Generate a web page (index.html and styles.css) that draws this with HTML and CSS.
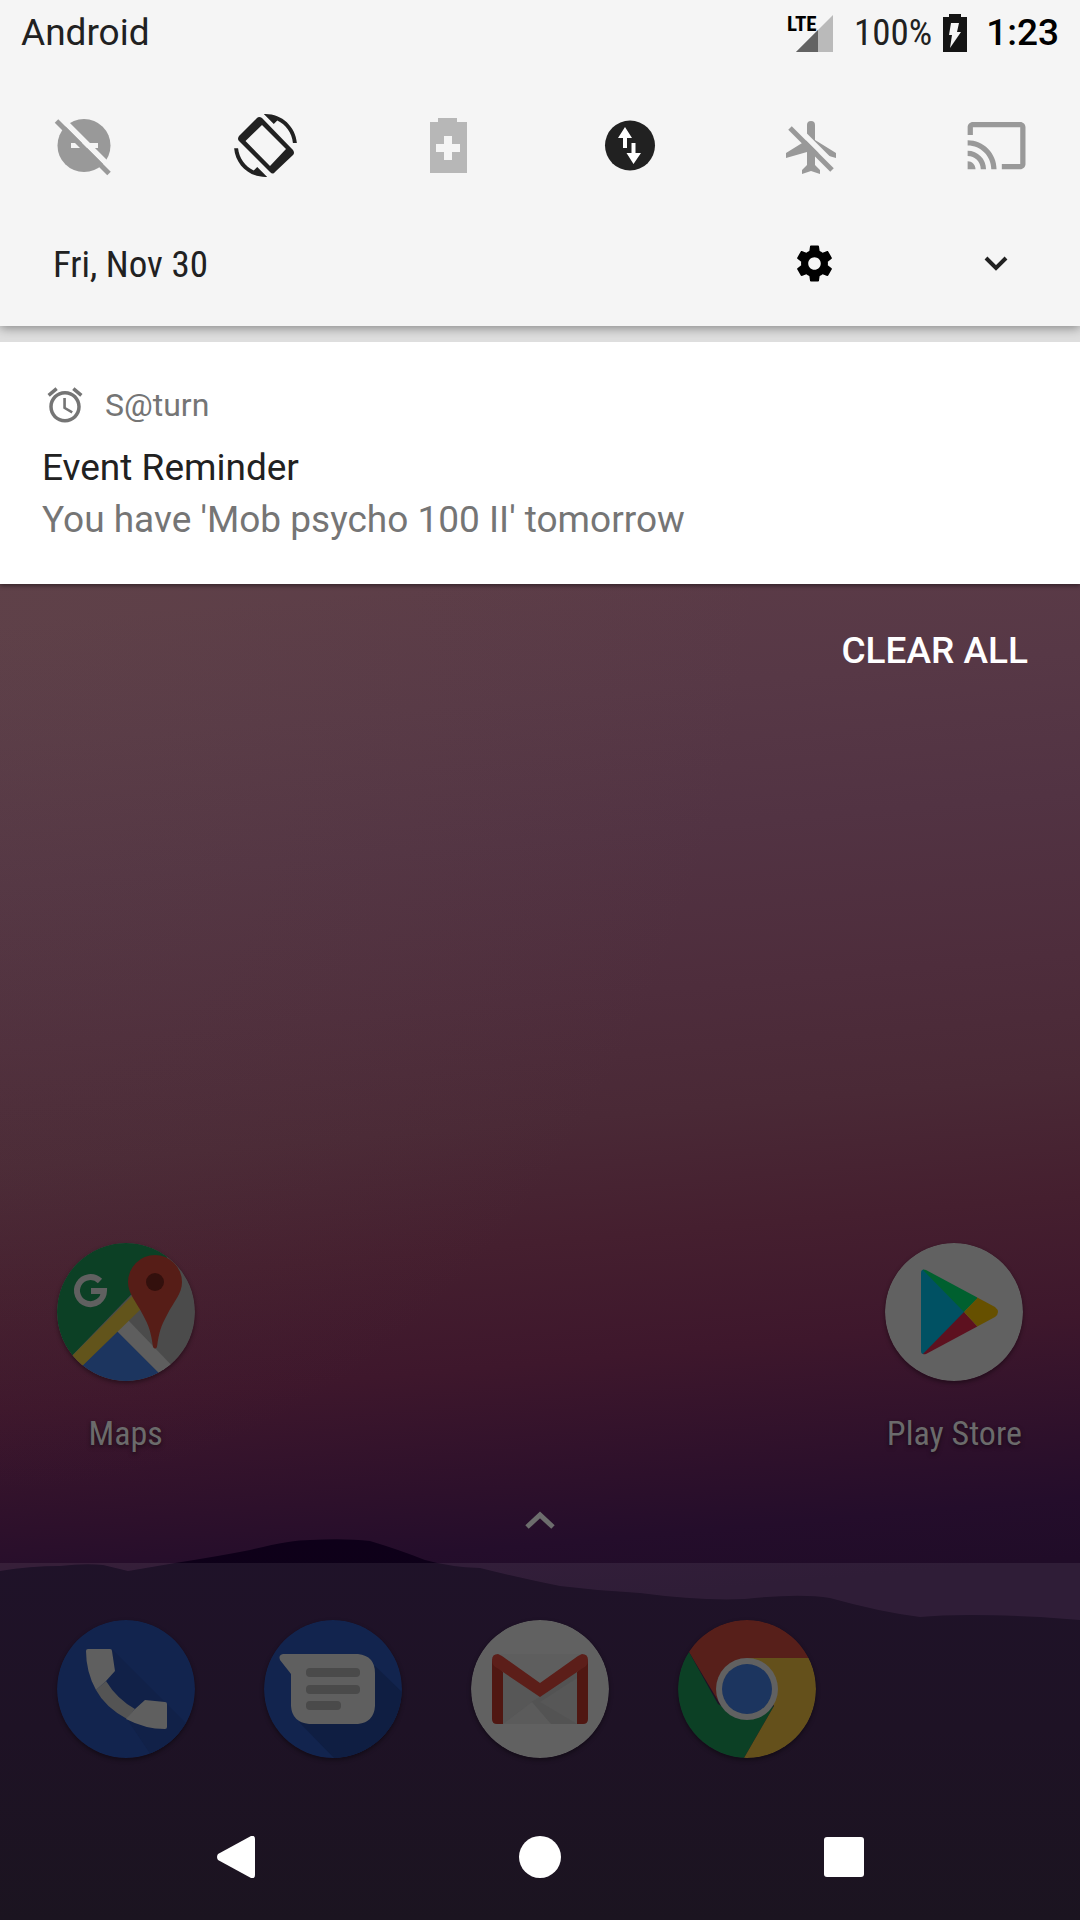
FILE: index.html
```html
<!DOCTYPE html>
<html lang="en">
<head>
<meta charset="utf-8">
<meta name="viewport" content="width=device-width, initial-scale=1">
<title>Android</title>
<link rel="stylesheet" href="styles.css">
</head>
<body>
<div class="screen">
  <svg class="mountains" viewBox="0 0 1080 390" preserveAspectRatio="none" aria-hidden="true">
    <defs>
      <linearGradient id="ridge" x1="0" y1="0" x2="0" y2="1">
        <stop offset="0" stop-color="#0e0019"/>
        <stop offset=".5" stop-color="#0d0115"/>
        <stop offset="1" stop-color="#0a0310"/>
      </linearGradient>
    </defs>
    <path fill="url(#ridge)" d="M0 41Q30 36 60 36Q85 33 103 35L128 41Q140 39 175 33Q220 26 250 20Q290 10 310 10Q345 8 370 11Q400 20 425 30Q450 37 480 38Q520 48 560 56Q600 61 640 63Q700 71 745 69Q800 63 830 68Q880 82 920 87Q960 83 1040 87L1080 90V390H0Z"/>
  </svg>

  <main class="home">
    <div class="apps">
      <a class="app app-first" href="#maps">
        <svg class="app-icon" viewBox="0 0 138 138" aria-hidden="true">
          <clipPath id="disc"><circle cx="69" cy="69" r="69"/></clipPath>
          <g clip-path="url(#disc)">
            <path fill="#4b4b4b" d="M0 0H138V138H0Z"/>
            <path fill="#0c4025" d="M0 0H124L8 120H0Z"/>
            <path fill="#1c355f" d="M60 88L110 138H10Z"/>
            <path fill="#5e5e5e" d="M71 77L122 130L110 138L60 88Z"/>
            <path fill="#62541b" d="M8 120L76 52L86 64L18 130Z"/>
          </g>
          <path fill="#561d17" d="M98 12a27 27 0 0 1 27 27c0 12-8 19-15 33c-6 11-8 17-10 32q-2 3-4 0c-2-15-4-21-10-32c-7-14-15-21-15-33a27 27 0 0 1 27-27z"/>
          <circle cx="98" cy="39" r="9" fill="#33100d"/>
          <path fill="none" stroke="#606060" stroke-width="6" d="M43 38A13.500 13.500 0 1 0 47 48H34"/>
        </svg>
        <span>Maps</span>
      </a>
      <a class="app app-last" href="#play">
        <svg class="app-icon" viewBox="0 0 138 138" aria-hidden="true">
          <clipPath id="play"><path d="M36 30q0-5 5-3L110 64q6 5 0 10L41 111q-5 1-5-3z"/></clipPath>
          <circle cx="69" cy="69" r="69" fill="#616161"/>
          <g clip-path="url(#play)">
            <path fill="#005163" d="M36 24L80 69L36 114Z"/>
            <path fill="#00602f" d="M36 25V20L92 50V56L79 69Z"/>
            <path fill="#5d111f" d="M36 113V120L92 88V83L79 69Z"/>
            <path fill="#665000" d="M92 50V55.500L79 69L92 83V90L120 69Z"/>
          </g>
        </svg>
        <span>Play Store</span>
      </a>
    </div>
    <button class="drawer" type="button" aria-label="All apps">
      <svg width="30" height="18" viewBox="0 0 30 18" aria-hidden="true"><path fill="none" stroke="#6d6d6d" stroke-width="5" d="M2 16L15 4L28 16"/></svg>
    </button>
    <div class="bottom">
      <div class="dock">
        <a class="app" href="#phone" aria-label="Phone">
          <svg class="app-icon" viewBox="0 0 138 138" aria-hidden="true">
            <circle cx="69" cy="69" r="69" fill="#12244e"/>
            <path clip-path="url(#disc)" fill="#112148" d="M55 29L138 112V138H96L70 99L49 61Z"/>
            <path fill="#545454" d="M49 61Q60 79 78 89L70 99Q48 87 39 70Z"/>
            <path fill="#5f5f5f" d="M31 29H53Q55 29 55 31L58 51L49 61L39 70Q29 52 29 31Q29 29 31 29ZM78 89L88 80L108 82Q110 82 110 84V107Q110 109 108 109Q88 109 69 99Z"/>
          </svg>
        </a>
        <a class="app" href="#messages" aria-label="Messages">
          <svg class="app-icon" viewBox="0 0 138 138" aria-hidden="true">
            <circle cx="69" cy="69" r="69" fill="#12244e"/>
            <path clip-path="url(#disc)" fill="#0f1e42" d="M111 46L138 72V138H70L35 102Z"/>
            <path fill="#5f5f5f" d="M19 34H94Q111 36 111 53V86Q110 102 94 104H45Q28 102 27 86V54L16 40Q14 35 19 34Z"/>
            <g fill="#4a4a4a"><rect x="42" y="48" width="54" height="9" rx="4"/><rect x="42" y="65" width="54" height="9" rx="4"/><rect x="42" y="81" width="35" height="9" rx="4"/></g>
          </svg>
        </a>
        <a class="app" href="#gmail" aria-label="Gmail">
          <svg class="app-icon" viewBox="0 0 138 138" aria-hidden="true">
            <circle cx="69" cy="69" r="69" fill="#616161"/>
            <path fill="#575757" d="M32 45H106V104H32Z"/>
            <path fill="#5e5e5e" d="M27 34H111L69 64Z"/>
            <path fill="#505050" d="M32 52L60 82L69 77L106 50V58L69 82L106 104H80L60 82Z" opacity=".5"/>
            <path fill="#5b5b5b" d="M32 104L61 82L80 104Z"/>
            <path fill="#501712" d="M21 40L32 52V104H26Q21 104 21 99ZM117 40L106 52V104H112Q117 104 117 99Z"/>
            <path fill="#5c1e19" d="M21 40Q21 34 27 34L31 36L69 63L107 36L111 34Q117 34 117 40Q117 46 112 48L69 77L26 48Q21 46 21 40Z"/>
          </svg>
        </a>
        <a class="app" href="#chrome" aria-label="Chrome">
          <svg class="app-icon" viewBox="0 0 138 138" aria-hidden="true">
            <g clip-path="url(#disc)">
              <path fill="#571f1a" d="M0 0H138V38H69L42 84L11 32Z"/>
              <path fill="#0c4025" d="M11 32L0 20V138H66L96 86L69 100L40 84Z"/>
              <path fill="#64501b" d="M69 38H138V138H66L96 86Z"/>
            </g>
            <circle cx="69" cy="69" r="31" fill="#616161"/>
            <circle cx="69" cy="69" r="25" fill="#1c355f"/>
          </svg>
        </a>
      </div>
      <nav class="navbar" aria-label="System">
        <button type="button" aria-label="Back"><svg width="42" height="42" viewBox="0 0 42 42" aria-hidden="true"><path fill="#fff" d="M3 18L36 0Q40-1 40 3V39Q40 43 36 42L3 24Q1 21 3 18Z"/></svg></button>
        <button type="button" aria-label="Home"><svg width="42" height="42" viewBox="0 0 42 42" aria-hidden="true"><circle cx="21" cy="21" r="21" fill="#fff"/></svg></button>
        <button type="button" aria-label="Overview"><svg width="42" height="42" viewBox="0 0 42 42" aria-hidden="true"><rect x="1" y="1" width="40" height="40" rx="3" fill="#fff"/></svg></button>
      </nav>
    </div>
  </main>

  <section class="shade" aria-label="Notification shade">
    <header class="panel">
      <div class="status">
        <span class="carrier">Android</span>
        <svg class="signal" width="48" height="40" viewBox="0 0 48 40" role="img" aria-label="LTE signal">
          <path fill="#bababa" d="M47 2V39H10Z"/>
          <path fill="#636363" d="M32 17V39H10Z"/>
          <text class="lte" x="1" y="18">LTE</text>
        </svg>
        <span class="percent">100%</span>
        <svg class="battery" width="24" height="38" viewBox="0 0 24 38" aria-hidden="true">
          <path fill="#141414" d="M6 0H18V3H24V38H0V3H6Z"/>
          <path fill="#f5f5f5" d="M8 9H16L14 18H18L7 34L9 21H6Z"/>
        </svg>
        <time class="clock">1:23</time>
      </div>
      <div class="tiles">
        <button type="button" aria-label="Do not disturb"><svg class="tile" viewBox="0 0 72 72" aria-hidden="true">
          <circle cx="36" cy="35.500" r="26.500" fill="#999"/><path fill="#f5f5f5" d="M23 33H50V38H23Z"/>
          <path stroke="#f5f5f5" stroke-width="5.500" d="M8 3L68 63"/><path stroke="#999" stroke-width="5" d="M8.500 11L61 63.500"/></svg></button>
        <button type="button" aria-label="Auto-rotate"><svg class="tile" viewBox="0 0 72 72" aria-hidden="true">
          <g fill="#212121" transform="translate(4 4)">
            <path transform="scale(2.625)" d="M16.480 2.520c3.270 1.550 5.610 4.720 5.970 8.480h1.500C23.440 4.840 18.290 0 12 0l-.66.030 3.810 3.810 1.330-1.320zM7.520 21.480C4.250 19.940 1.910 16.760 1.550 13H.050C.56 19.160 5.710 24 12 24l.66-.030-3.810-3.810-1.330 1.320z"/>
            <path fill-rule="evenodd" d="M5 22L23 4Q25 2 28 4L59 36Q61 39 59 41L41 58Q39 61 36 58L5 27Q3 25 5 22ZM11.500 27L36 52L52 35L28 11Z"/>
          </g></svg></button>
        <button type="button" aria-label="Battery saver"><svg class="tile" viewBox="0 0 72 72" aria-hidden="true">
          <path fill="#b7b7b7" d="M26 8H45V12H55V63H18V12H26Z"/><path fill="#f5f5f5" d="M32 26H40V34H48V42H40V50H32V42H24V34H32Z"/></svg></button>
        <button type="button" aria-label="Mobile data"><svg class="tile" viewBox="0 0 72 72" aria-hidden="true">
          <circle cx="36" cy="35.500" r="25" fill="#212121"/><path fill="#fff" d="M31 17L38 28H33V38H29V28H24ZM39.500 54L32.500 43H37.500V33H41.500V43H47Z"/></svg></button>
        <button type="button" aria-label="Airplane mode"><svg class="tile" viewBox="0 0 72 72" aria-hidden="true">
          <path fill="#999" d="M31 15a4 4 0 0 1 8 0V30L60 43V48L39 42V55L44 60V64L35 61L26 64V60L31 55V42L10 48V43L31 30Z"/>
          <path stroke="#f5f5f5" stroke-width="5.500" d="M12 8.500L62 58.500"/><path stroke="#999" stroke-width="5" d="M14 18L56 60"/></svg></button>
        <button type="button" aria-label="Cast"><svg class="tile" viewBox="0 0 72 72" aria-hidden="true">
          <path fill="#999" transform="translate(7 4) scale(2.630)" d="M21 3H3c-1.100 0-2 .9-2 2v3h2V5h18v14h-7v2h7c1.100 0 2-.9 2-2V5c0-1.100-.9-2-2-2zM1 18v3h3c0-1.660-1.340-3-3-3zm0-4v2c2.760 0 5 2.240 5 5h2c0-3.870-3.130-7-7-7zm0-4v2c4.970 0 9 4.030 9 9h2c0-6.080-4.930-11-11-11z"/></svg></button>
      </div>
      <div class="date-row">
        <span class="date">Fri, Nov 30</span>
        <button type="button" aria-label="Settings"><svg width="43" height="43" viewBox="0 0 24 24" aria-hidden="true"><path d="M19.430 12.980c.040-.32.070-.64.070-.98s-.030-.66-.070-.98l2.110-1.650c.19-.15.24-.42.12-.64l-2-3.460c-.12-.22-.39-.3-.61-.22l-2.490 1c-.52-.4-1.080-.73-1.690-.98l-.38-2.650C14.460 2.180 14.250 2 14 2h-4c-.25 0-.46.180-.49.420l-.38 2.650c-.61.25-1.170.59-1.690.98l-2.490-1c-.23-.090-.49 0-.61.22l-2 3.460c-.13.22-.070.49.12.64l2.110 1.650c-.040.32-.070.65-.070.98s.030.66.070.98l-2.110 1.650c-.19.15-.24.42-.12.64l2 3.460c.12.22.39.3.61.22l2.490-1c.52.4 1.080.73 1.690.98l.38 2.650c.030.24.24.42.49.42h4c.25 0 .46-.18.49-.42l.38-2.650c.61-.25 1.170-.59 1.690-.98l2.490 1c.23.090.49 0 .61-.22l2-3.460c.12-.22.070-.49-.12-.64l-2.110-1.650zM12 15.500c-1.930 0-3.500-1.570-3.500-3.500s1.570-3.500 3.500-3.500 3.500 1.570 3.500 3.500-1.570 3.500-3.500 3.500z"/></svg></button>
        <button type="button" aria-label="Expand"><svg width="24" height="16" viewBox="0 0 24 16" aria-hidden="true"><path fill="none" stroke="#212121" stroke-width="4" d="M2 3L12 13L22 3"/></svg></button>
      </div>
    </header>
    <article class="notification">
      <div class="source">
        <svg width="42" height="42" viewBox="0 0 24 24" aria-hidden="true"><path fill="#757575" d="M22 5.720l-4.600-3.860-1.290 1.530 4.600 3.860L22 5.720zM7.880 3.390L6.600 1.860 2 5.710l1.290 1.530 4.590-3.850zM12.500 8H11v6l4.750 2.850.75-1.230-4-2.370V8zM12 4c-4.970 0-9 4.030-9 9s4.020 9 9 9c4.970 0 9-4.030 9-9s-4.030-9-9-9zm0 16c-3.870 0-7-3.130-7-7s3.130-7 7-7 7 3.130 7 7-3.130 7-7 7z"/></svg>
        <span>S@turn</span>
      </div>
      <h1>Event Reminder</h1>
      <p>You have 'Mob psycho 100 II' tomorrow</p>
    </article>
    <button class="clear" type="button">CLEAR ALL</button>
  </section>
</div>
</body>
</html>
```

FILE: styles.css
```css
* { box-sizing: border-box; }

body {
  margin: 0;
  font-family: Roboto, "Liberation Sans", sans-serif;
  font-size: 37px;
  color: #212121;
}

button {
  display: flex;
  align-items: center;
  justify-content: center;
  padding: 0;
  border: 0;
  background: none;
  font: inherit;
  color: inherit;
}

a { color: inherit; text-decoration: none; }
svg { display: block; }

.screen {
  position: relative;
  min-height: 100vh;
  display: flex;
  flex-direction: column;
  background:
    radial-gradient(ellipse at 0 25%, rgba(112, 92, 80, .2), transparent 50%),
    linear-gradient(175deg,
      #5b3b47 31%, #573846 37%, #523343 44%, #4e2d3c 52%, #4a2936 58%,
      #451f2f 64%, #3e172c 70%, #2d102b 76%, #240d2b 79%, #200c28 82%);
}

.mountains {
  position: absolute;
  left: 0;
  bottom: 0;
  width: 100%;
  height: 390px;
}

/* Launcher */
.home {
  position: relative;
  flex: 1;
  display: flex;
  flex-direction: column;
  justify-content: flex-end;
  padding-top: 640px;
}

.apps, .dock {
  display: grid;
  grid-template-columns: repeat(5, 1fr);
  padding: 0 22px;
}

.app {
  display: flex;
  flex-direction: column;
  align-items: center;
  gap: 32px;
  font-family: "Roboto Condensed", "Liberation Sans Narrow", Roboto, sans-serif;
  font-size: 34px;
  line-height: 40px;
  color: #6b6b6b;
  text-shadow: 0 2px 4px rgba(0, 0, 0, .5);
  white-space: nowrap;
}

.app-last { grid-column: 5; }

.app-icon {
  width: 138px;
  height: 138px;
  border-radius: 50%;
  box-shadow: 0 2px 4px rgba(0, 0, 0, .4);
}

.drawer {
  align-self: center;
  width: 126px;
  height: 86px;
  margin-top: 24px;
}

.bottom { background: rgba(255, 255, 255, .07); }
.dock { padding-top: 57px; padding-bottom: 36px; }

.navbar {
  display: flex;
  justify-content: center;
  gap: 94px;
}

.navbar button { width: 210px; height: 126px; }

/* Notification shade */
.shade {
  position: absolute;
  top: 0;
  left: 0;
  right: 0;
  display: flex;
  flex-direction: column;
}

.panel {
  position: relative;
  background: #f5f5f5;
  box-shadow: 0 2px 10px rgba(0, 0, 0, .4);
}

.status {
  display: flex;
  align-items: center;
  height: 63px;
  padding: 2px 21px 0;
}

.carrier { flex: 1; }

.percent, .date, .lte {
  font-family: "Roboto Condensed", "Liberation Sans Narrow", Roboto, sans-serif;
}

.signal { overflow: visible; }
.lte { font-size: 21px; font-weight: 700; fill: #000; }
.percent { margin-left: 20px; }
.battery { margin-left: 11px; }
.clock { margin-left: 19px; font-weight: 500; color: #000; }

.tiles {
  display: flex;
  justify-content: space-between;
  padding: 29px 14px 0 12px;
}

.tiles button { width: 144px; height: 108px; }
.tile { width: 72px; height: 72px; }

.date-row {
  display: flex;
  align-items: center;
  gap: 38px;
  height: 126px;
  padding: 0 12px 0 53px;
}

.date { flex: 1; padding-top: 2px; }
.date-row button { width: 144px; height: 100%; }

.notification {
  padding: 42px 42px 38px;
  border-top: 16px solid #dedede;
  background: #fff;
  box-shadow: 0 2px 4px rgba(0, 0, 0, .4);
  color: #757575;
}

.source {
  display: flex;
  align-items: center;
  gap: 19px;
  height: 42px;
  margin-bottom: 16px;
  font-size: 32px;
  line-height: 42px;
}

.notification svg { margin-left: 2px; }

h1, p {
  margin: 0;
  font-size: 37px;
  font-weight: 400;
  line-height: 52px;
}

h1 { color: #212121; }

.clear {
  align-self: flex-end;
  height: 132px;
  padding: 0 52px;
  font-weight: 500;
  color: #fff;
}
```
